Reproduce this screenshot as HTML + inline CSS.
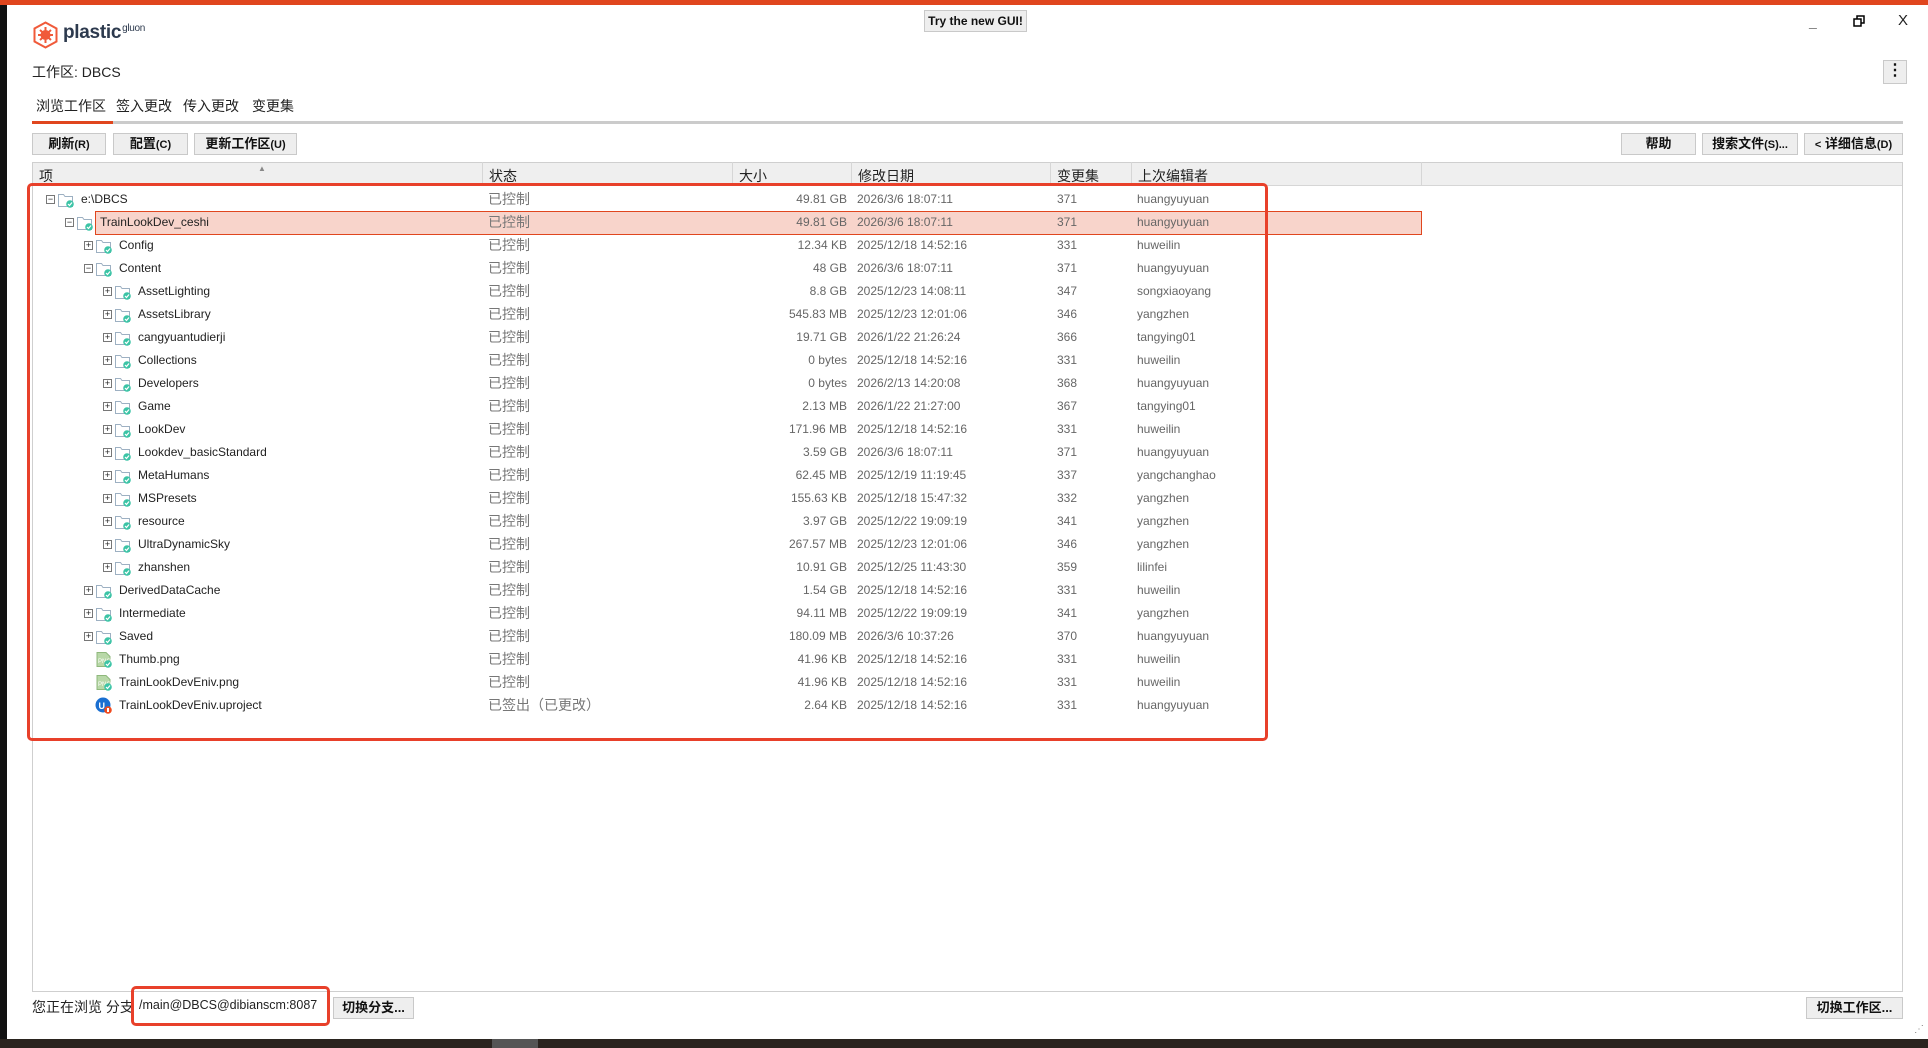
<!DOCTYPE html>
<html><head><meta charset="utf-8"><style>
*{margin:0;padding:0;box-sizing:border-box}
body{width:1928px;height:1048px;background:#fff;position:relative;overflow:hidden;font-family:"Liberation Sans","Noto Sans CJK SC",sans-serif;color:#222}
.a{position:absolute}
.btn{position:absolute;background:#eeeeee;border:1px solid #c9c9c9;font-weight:bold;font-size:13px;text-align:center;line-height:20px;color:#111}
.r{position:absolute;left:33px;width:1869px;height:23px;font-size:12px;line-height:23px}
.r span{position:absolute;top:0;white-space:nowrap}
.s{left:455px;color:#777;font-size:14px}
.z{left:600px;width:214px;text-align:right;color:#666}
.d{left:824px;color:#666}
.c{left:1024px;color:#666}
.e{left:1104px;color:#666}
.x{width:9px;height:9px;border:1px solid #777;top:7px!important;font-size:9px;line-height:7px;text-align:center;color:#222;background:#fff}
.i{position:absolute;top:3px;width:17px;height:17px}
.hd{position:absolute;top:162px;height:24px;font-size:14px;line-height:28px;color:#222;border-right:1px solid #d6d6d6;padding-left:6px}
</style></head><body>
<svg width="0" height="0" style="position:absolute"><defs>
<g id="f"><path d="M1.5 3.5h5l1.5 2h7.5v10h-14z" fill="#fff" stroke="#9db0c2" stroke-width="1"/><circle cx="13" cy="13" r="3.8" fill="#3cc4a6"/><path d="M11 13l1.5 1.5 2.5-3" stroke="#fff" stroke-width="1.2" fill="none"/></g>
<g id="p"><path d="M2 1.5h9l4 4v10h-13z" fill="#b8d8a8" stroke="#8fb87c"/><text x="3" y="12" font-size="6" fill="#fff" font-family="Liberation Sans">PNG</text><circle cx="13" cy="13" r="3.8" fill="#3cc4a6"/><path d="M11 13l1.5 1.5 2.5-3" stroke="#fff" stroke-width="1.2" fill="none"/></g>
<g id="u"><circle cx="8" cy="8" r="7.5" fill="#1a6fd1"/><text x="3.5" y="12" font-size="9" fill="#fff" font-weight="bold" font-family="Liberation Sans">U</text><circle cx="13" cy="13" r="3.8" fill="#f04a1e"/><rect x="12" y="11" width="2" height="4" fill="#fff"/></g>
</defs></svg>
<div class="a" style="left:0;top:0;width:1928px;height:5px;background:#e0461e"></div>
<div class="a" style="left:0;top:5px;width:7px;height:1043px;background:#111"></div>
<div class="a" style="left:0;top:1039px;width:1928px;height:9px;background:#2a241f"></div>
<div class="a" style="left:492px;top:1039px;width:46px;height:9px;background:#555"></div>
<svg class="a" style="left:32px;top:21px" width="27" height="28" viewBox="0 0 27 28"><path d="M13.5 1.5l11 6v13l-11 6-11-6v-13z" fill="#fff" stroke="#f05a3a" stroke-width="2"/><circle cx="13.5" cy="14" r="5" fill="#f05a3a"/><g stroke="#f05a3a" stroke-width="2"><path d="M13.5 6v16M6 14h15M8 9l11 10M19 9L8 19"/></g></svg>
<div class="a" style="left:63px;top:22px;font-size:19px;font-weight:bold;color:#2d3a4e;letter-spacing:-0.3px">plastic<span style="font-size:10px;font-weight:normal;vertical-align:7px;margin-left:1px">gluon</span></div>
<div class="btn" style="left:924px;top:10px;width:103px;height:22px;font-size:12px">Try the new GUI!</div>
<div class="a" style="left:1809px;top:14px;font-size:14px;font-weight:bold">_</div>
<svg class="a" style="left:1853px;top:15px" width="12" height="12"><rect x="1" y="4" width="7" height="7" fill="none" stroke="#000" stroke-width="1.5"/><path d="M4 4V1h7v7H8" fill="none" stroke="#000" stroke-width="1.5"/></svg>
<div class="a" style="left:1898px;top:12px;font-size:15px">X</div>
<div class="btn" style="left:1883px;top:60px;width:24px;height:24px;font-size:16px;line-height:20px">⋮</div>
<div class="a" style="left:32px;top:62px;font-size:14px">工作区: DBCS</div>
<div class="a" style="left:36px;top:96px;font-size:14px">浏览工作区</div>
<div class="a" style="left:116px;top:96px;font-size:14px">签入更改</div>
<div class="a" style="left:183px;top:96px;font-size:14px">传入更改</div>
<div class="a" style="left:252px;top:96px;font-size:14px">变更集</div>
<div class="a" style="left:32px;top:121px;width:1871px;height:3px;background:#cbcbcb"></div>
<div class="a" style="left:32px;top:121px;width:81px;height:3px;background:#e0461e"></div>
<div class="btn" style="left:32px;top:133px;width:74px;height:22px">刷新<span style="font-size:11px">(R)</span></div>
<div class="btn" style="left:113px;top:133px;width:75px;height:22px">配置<span style="font-size:11px">(C)</span></div>
<div class="btn" style="left:194px;top:133px;width:103px;height:22px">更新工作区<span style="font-size:11px">(U)</span></div>
<div class="btn" style="left:1621px;top:133px;width:75px;height:22px">帮助</div>
<div class="btn" style="left:1702px;top:133px;width:96px;height:22px">搜索文件<span style="font-size:11px">(S)...</span></div>
<div class="btn" style="left:1804px;top:133px;width:99px;height:22px"><span style="font-size:11px">&lt;</span> 详细信息<span style="font-size:11px">(D)</span></div>
<div class="a" style="left:32px;top:162px;width:1871px;height:830px;border:1px solid #cfcfcf;background:#fff"></div>
<div class="a" style="left:33px;top:163px;width:1869px;height:23px;background:#efefef;border-bottom:1px solid #d6d6d6"></div>
<div class="hd" style="left:33px;width:450px">项</div>
<div class="a" style="left:258px;top:164px;font-size:8px;color:#888">▲</div>
<div class="hd" style="left:483px;width:250px">状态</div>
<div class="hd" style="left:733px;width:119px">大小</div>
<div class="hd" style="left:852px;width:199px">修改日期</div>
<div class="hd" style="left:1051px;width:81px">变更集</div>
<div class="hd" style="left:1132px;width:290px">上次编辑者</div>
<div class="a" style="left:95px;top:211px;width:1327px;height:24px;background:#f8d4cb;border:1px solid #e0461e"></div>

<div class="r" style="top:188px"><span class="x" style="left:13px">−</span><svg class="i" style="left:24px"><use href="#f"/></svg><span style="left:48px">e:\DBCS</span><span class="s">已控制</span><span class="z">49.81 GB</span><span class="d">2026/3/6 18:07:11</span><span class="c">371</span><span class="e">huangyuyuan</span></div>
<div class="r" style="top:211px"><span class="x" style="left:32px">−</span><svg class="i" style="left:43px"><use href="#f"/></svg><span style="left:67px">TrainLookDev_ceshi</span><span class="s">已控制</span><span class="z">49.81 GB</span><span class="d">2026/3/6 18:07:11</span><span class="c">371</span><span class="e">huangyuyuan</span></div>
<div class="r" style="top:234px"><span class="x" style="left:51px">+</span><svg class="i" style="left:62px"><use href="#f"/></svg><span style="left:86px">Config</span><span class="s">已控制</span><span class="z">12.34 KB</span><span class="d">2025/12/18 14:52:16</span><span class="c">331</span><span class="e">huweilin</span></div>
<div class="r" style="top:257px"><span class="x" style="left:51px">−</span><svg class="i" style="left:62px"><use href="#f"/></svg><span style="left:86px">Content</span><span class="s">已控制</span><span class="z">48 GB</span><span class="d">2026/3/6 18:07:11</span><span class="c">371</span><span class="e">huangyuyuan</span></div>
<div class="r" style="top:280px"><span class="x" style="left:70px">+</span><svg class="i" style="left:81px"><use href="#f"/></svg><span style="left:105px">AssetLighting</span><span class="s">已控制</span><span class="z">8.8 GB</span><span class="d">2025/12/23 14:08:11</span><span class="c">347</span><span class="e">songxiaoyang</span></div>
<div class="r" style="top:303px"><span class="x" style="left:70px">+</span><svg class="i" style="left:81px"><use href="#f"/></svg><span style="left:105px">AssetsLibrary</span><span class="s">已控制</span><span class="z">545.83 MB</span><span class="d">2025/12/23 12:01:06</span><span class="c">346</span><span class="e">yangzhen</span></div>
<div class="r" style="top:326px"><span class="x" style="left:70px">+</span><svg class="i" style="left:81px"><use href="#f"/></svg><span style="left:105px">cangyuantudierji</span><span class="s">已控制</span><span class="z">19.71 GB</span><span class="d">2026/1/22 21:26:24</span><span class="c">366</span><span class="e">tangying01</span></div>
<div class="r" style="top:349px"><span class="x" style="left:70px">+</span><svg class="i" style="left:81px"><use href="#f"/></svg><span style="left:105px">Collections</span><span class="s">已控制</span><span class="z">0 bytes</span><span class="d">2025/12/18 14:52:16</span><span class="c">331</span><span class="e">huweilin</span></div>
<div class="r" style="top:372px"><span class="x" style="left:70px">+</span><svg class="i" style="left:81px"><use href="#f"/></svg><span style="left:105px">Developers</span><span class="s">已控制</span><span class="z">0 bytes</span><span class="d">2026/2/13 14:20:08</span><span class="c">368</span><span class="e">huangyuyuan</span></div>
<div class="r" style="top:395px"><span class="x" style="left:70px">+</span><svg class="i" style="left:81px"><use href="#f"/></svg><span style="left:105px">Game</span><span class="s">已控制</span><span class="z">2.13 MB</span><span class="d">2026/1/22 21:27:00</span><span class="c">367</span><span class="e">tangying01</span></div>
<div class="r" style="top:418px"><span class="x" style="left:70px">+</span><svg class="i" style="left:81px"><use href="#f"/></svg><span style="left:105px">LookDev</span><span class="s">已控制</span><span class="z">171.96 MB</span><span class="d">2025/12/18 14:52:16</span><span class="c">331</span><span class="e">huweilin</span></div>
<div class="r" style="top:441px"><span class="x" style="left:70px">+</span><svg class="i" style="left:81px"><use href="#f"/></svg><span style="left:105px">Lookdev_basicStandard</span><span class="s">已控制</span><span class="z">3.59 GB</span><span class="d">2026/3/6 18:07:11</span><span class="c">371</span><span class="e">huangyuyuan</span></div>
<div class="r" style="top:464px"><span class="x" style="left:70px">+</span><svg class="i" style="left:81px"><use href="#f"/></svg><span style="left:105px">MetaHumans</span><span class="s">已控制</span><span class="z">62.45 MB</span><span class="d">2025/12/19 11:19:45</span><span class="c">337</span><span class="e">yangchanghao</span></div>
<div class="r" style="top:487px"><span class="x" style="left:70px">+</span><svg class="i" style="left:81px"><use href="#f"/></svg><span style="left:105px">MSPresets</span><span class="s">已控制</span><span class="z">155.63 KB</span><span class="d">2025/12/18 15:47:32</span><span class="c">332</span><span class="e">yangzhen</span></div>
<div class="r" style="top:510px"><span class="x" style="left:70px">+</span><svg class="i" style="left:81px"><use href="#f"/></svg><span style="left:105px">resource</span><span class="s">已控制</span><span class="z">3.97 GB</span><span class="d">2025/12/22 19:09:19</span><span class="c">341</span><span class="e">yangzhen</span></div>
<div class="r" style="top:533px"><span class="x" style="left:70px">+</span><svg class="i" style="left:81px"><use href="#f"/></svg><span style="left:105px">UltraDynamicSky</span><span class="s">已控制</span><span class="z">267.57 MB</span><span class="d">2025/12/23 12:01:06</span><span class="c">346</span><span class="e">yangzhen</span></div>
<div class="r" style="top:556px"><span class="x" style="left:70px">+</span><svg class="i" style="left:81px"><use href="#f"/></svg><span style="left:105px">zhanshen</span><span class="s">已控制</span><span class="z">10.91 GB</span><span class="d">2025/12/25 11:43:30</span><span class="c">359</span><span class="e">lilinfei</span></div>
<div class="r" style="top:579px"><span class="x" style="left:51px">+</span><svg class="i" style="left:62px"><use href="#f"/></svg><span style="left:86px">DerivedDataCache</span><span class="s">已控制</span><span class="z">1.54 GB</span><span class="d">2025/12/18 14:52:16</span><span class="c">331</span><span class="e">huweilin</span></div>
<div class="r" style="top:602px"><span class="x" style="left:51px">+</span><svg class="i" style="left:62px"><use href="#f"/></svg><span style="left:86px">Intermediate</span><span class="s">已控制</span><span class="z">94.11 MB</span><span class="d">2025/12/22 19:09:19</span><span class="c">341</span><span class="e">yangzhen</span></div>
<div class="r" style="top:625px"><span class="x" style="left:51px">+</span><svg class="i" style="left:62px"><use href="#f"/></svg><span style="left:86px">Saved</span><span class="s">已控制</span><span class="z">180.09 MB</span><span class="d">2026/3/6 10:37:26</span><span class="c">370</span><span class="e">huangyuyuan</span></div>
<div class="r" style="top:648px"><svg class="i" style="left:62px"><use href="#p"/></svg><span style="left:86px">Thumb.png</span><span class="s">已控制</span><span class="z">41.96 KB</span><span class="d">2025/12/18 14:52:16</span><span class="c">331</span><span class="e">huweilin</span></div>
<div class="r" style="top:671px"><svg class="i" style="left:62px"><use href="#p"/></svg><span style="left:86px">TrainLookDevEniv.png</span><span class="s">已控制</span><span class="z">41.96 KB</span><span class="d">2025/12/18 14:52:16</span><span class="c">331</span><span class="e">huweilin</span></div>
<div class="r" style="top:694px"><svg class="i" style="left:62px"><use href="#u"/></svg><span style="left:86px">TrainLookDevEniv.uproject</span><span class="s">已签出（已更改）</span><span class="z">2.64 KB</span><span class="d">2025/12/18 14:52:16</span><span class="c">331</span><span class="e">huangyuyuan</span></div>

<div class="a" style="left:27px;top:183px;width:1241px;height:558px;border:3px solid #e8402a;border-radius:5px"></div>
<div class="a" style="left:32px;top:997px;font-size:14px">您正在浏览 分支</div>
<div class="a" style="left:139px;top:998px;font-size:12.5px">/main@DBCS@dibianscm:8087</div>
<div class="a" style="left:131px;top:986px;width:199px;height:40px;border:3px solid #e8402a;border-radius:5px"></div>
<div class="btn" style="left:333px;top:997px;width:81px;height:22px">切换分支...</div>
<div class="btn" style="left:1806px;top:997px;width:97px;height:22px">切换工作区...</div>
<div class="a" style="left:1914px;top:1024px;font-size:10px;color:#888">⋰</div>
</body></html>
